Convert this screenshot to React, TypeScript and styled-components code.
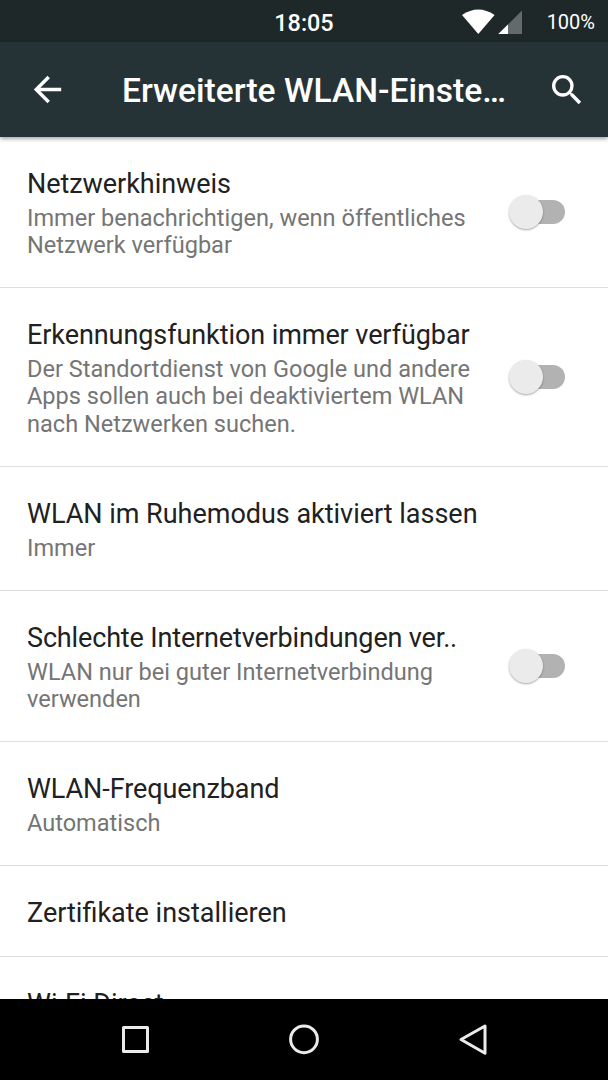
import React from "react";
import styled, { createGlobalStyle } from "styled-components";

const Global = createGlobalStyle`
  * { box-sizing: border-box; }
  body { margin: 0; background: #fff; font-family: Roboto, sans-serif; }
`;
const Screen = styled.div`
  width: 608px; height: 1080px; display: flex; flex-direction: column; overflow: hidden; background: #fff;
`;
const StatusBar = styled.div`
  height: 42px; flex: none; background: #1f2829; color: #fff;
  display: grid; grid-template-columns: 1fr auto 1fr; align-items: center; padding-top: 2px;
`;
const Clock = styled.span`grid-column: 2; margin-top: 1px; font-size: 23.4px; font-weight: 500; line-height: 26px;`;
const StatusIcons = styled.div`
  display: flex; justify-content: flex-end; align-items: center; padding-right: 13px;
  svg { display: block; }
`;
const Battery = styled.span`font-size: 20px; line-height: 24px; margin-left: 24px;`;
const AppBar = styled.header`
  height: 95px; flex: none; background: #263336; color: #fff; display: flex; align-items: center;
  box-shadow: 0 2px 4px rgba(0,0,0,.35); z-index: 1; padding: 0 21px 0 27px;
  svg { flex: none; }
`;
const Title = styled.h1`
  margin: 3px 0 0 54px; flex: 1; font-size: 33.6px; line-height: 42px; font-weight: 500; white-space: nowrap;
`;
const List = styled.main`flex: 1; min-height: 0; overflow: hidden;`;
const Row = styled.section<{ $h: number }>`
  height: ${p => p.$h}px; border-bottom: 1px solid #dedede; padding: 30px 42px 0 27px;
  display: flex; justify-content: space-between;
`;
const Name = styled.div<{ $tracking?: number }>`
  font-size: 27px; line-height: 34px; color: #212121; white-space: nowrap;
  letter-spacing: ${p => p.$tracking ?? 0}px;
`;
const Detail = styled.div`
  margin-top: 4px; font-size: 23.56px; line-height: 27.4px; color: #757575; white-space: pre;
`;
const Toggle = styled.div`
  width: 58px; height: 36px; margin-bottom: 30px; align-self: center; display: flex; align-items: center; flex: none;
`;
const Track = styled.div`
  width: 48px; height: 24px; flex: none; border-radius: 12px; background: #b2b2b2; margin-left: 9px;
`;
const Thumb = styled.div`
  width: 34px; height: 34px; border-radius: 50%; background: #ebebeb; box-shadow: 0 1px 2px rgba(0,0,0,.34);
  margin: 0 -34.5px 0 .5px; flex: none; z-index: 1;
`;
const NavBar = styled.nav`
  height: 81px; flex: none; background: #000; display: flex; justify-content: center; align-items: center;
`;

const items = [
  { name: "Netzwerkhinweis", tracking: -0.05, detail: "Immer benachrichtigen, wenn öffentliches\nNetzwerk verfügbar", h: 151, toggle: true },
  { name: "Erkennungsfunktion immer verfügbar", tracking: -0.08, detail: "Der Standortdienst von Google und andere\nApps sollen auch bei deaktiviertem WLAN\nnach Netzwerken suchen.", h: 179, toggle: true },
  { name: "WLAN im Ruhemodus aktiviert lassen", tracking: -0.02, detail: "Immer", h: 124 },
  { name: "Schlechte Internetverbindungen ver..", tracking: -0.15, detail: "WLAN nur bei guter Internetverbindung\nverwenden", h: 151, toggle: true },
  { name: "WLAN-Frequenzband", tracking: -0.08, detail: "Automatisch", h: 124 },
  { name: "Zertifikate installieren", h: 91 },
  { name: "Wi-Fi Direct", h: 91 },
];

export default function App() {
  return (
    <Screen>
      <Global />
      <StatusBar>
        <Clock>18:05</Clock>
        <StatusIcons>
          <svg width="61" height="26" viewBox="0 0 61 26">
            <path d="M0 6Q16.3-5 32.6 6L16.3 25Z" fill="#fff" />
            <path d="M36.3 25L60 1.5V25Z" fill="#636a6b" />
            <path d="M36.3 25L46 15.4V25Z" fill="#fff" />
          </svg>
          <Battery>100%</Battery>
        </StatusIcons>
      </StatusBar>
      <AppBar>
        <svg width="41" height="41" viewBox="0 0 24 24" fill="#fff"><path d="M20 11H7.83l5.59-5.59L12 4l-8 8 8 8 1.41-1.41L7.83 13H20v-2z" /></svg>
        <Title>Erweiterte WLAN-Einste…</Title>
        <svg width="40" height="40" viewBox="0 0 24 24" fill="#fff"><path d="M15.5 14h-.79l-.28-.27A6.47 6.47 0 0 0 16 9.5 6.5 6.5 0 1 0 9.5 16c1.61 0 3.09-.59 4.23-1.57l.27.28v.79l5 4.99L20.49 19l-4.99-5zm-6 0a4.5 4.5 0 1 1 0-9 4.5 4.5 0 0 1 0 9z" /></svg>
      </AppBar>
      <List>
        {items.map(i => (
          <Row key={i.name} $h={i.h}>
            <div>
              <Name $tracking={i.tracking}>{i.name}</Name>
              {i.detail && <Detail>{i.detail}</Detail>}
            </div>
            {i.toggle && <Toggle><Thumb /><Track /></Toggle>}
          </Row>
        ))}
      </List>
      <NavBar>
        <svg width="368" height="35" viewBox="0 0 368 35" fill="none" stroke="#ebebeb" strokeWidth="3" strokeLinejoin="round">
          <rect x="3.5" y="5.5" width="24" height="24" />
          <circle cx="184" cy="17.3" r="13.4" />
          <path d="M365 4V31.3L341 17.5Z" />
        </svg>
      </NavBar>
    </Screen>
  );
}
